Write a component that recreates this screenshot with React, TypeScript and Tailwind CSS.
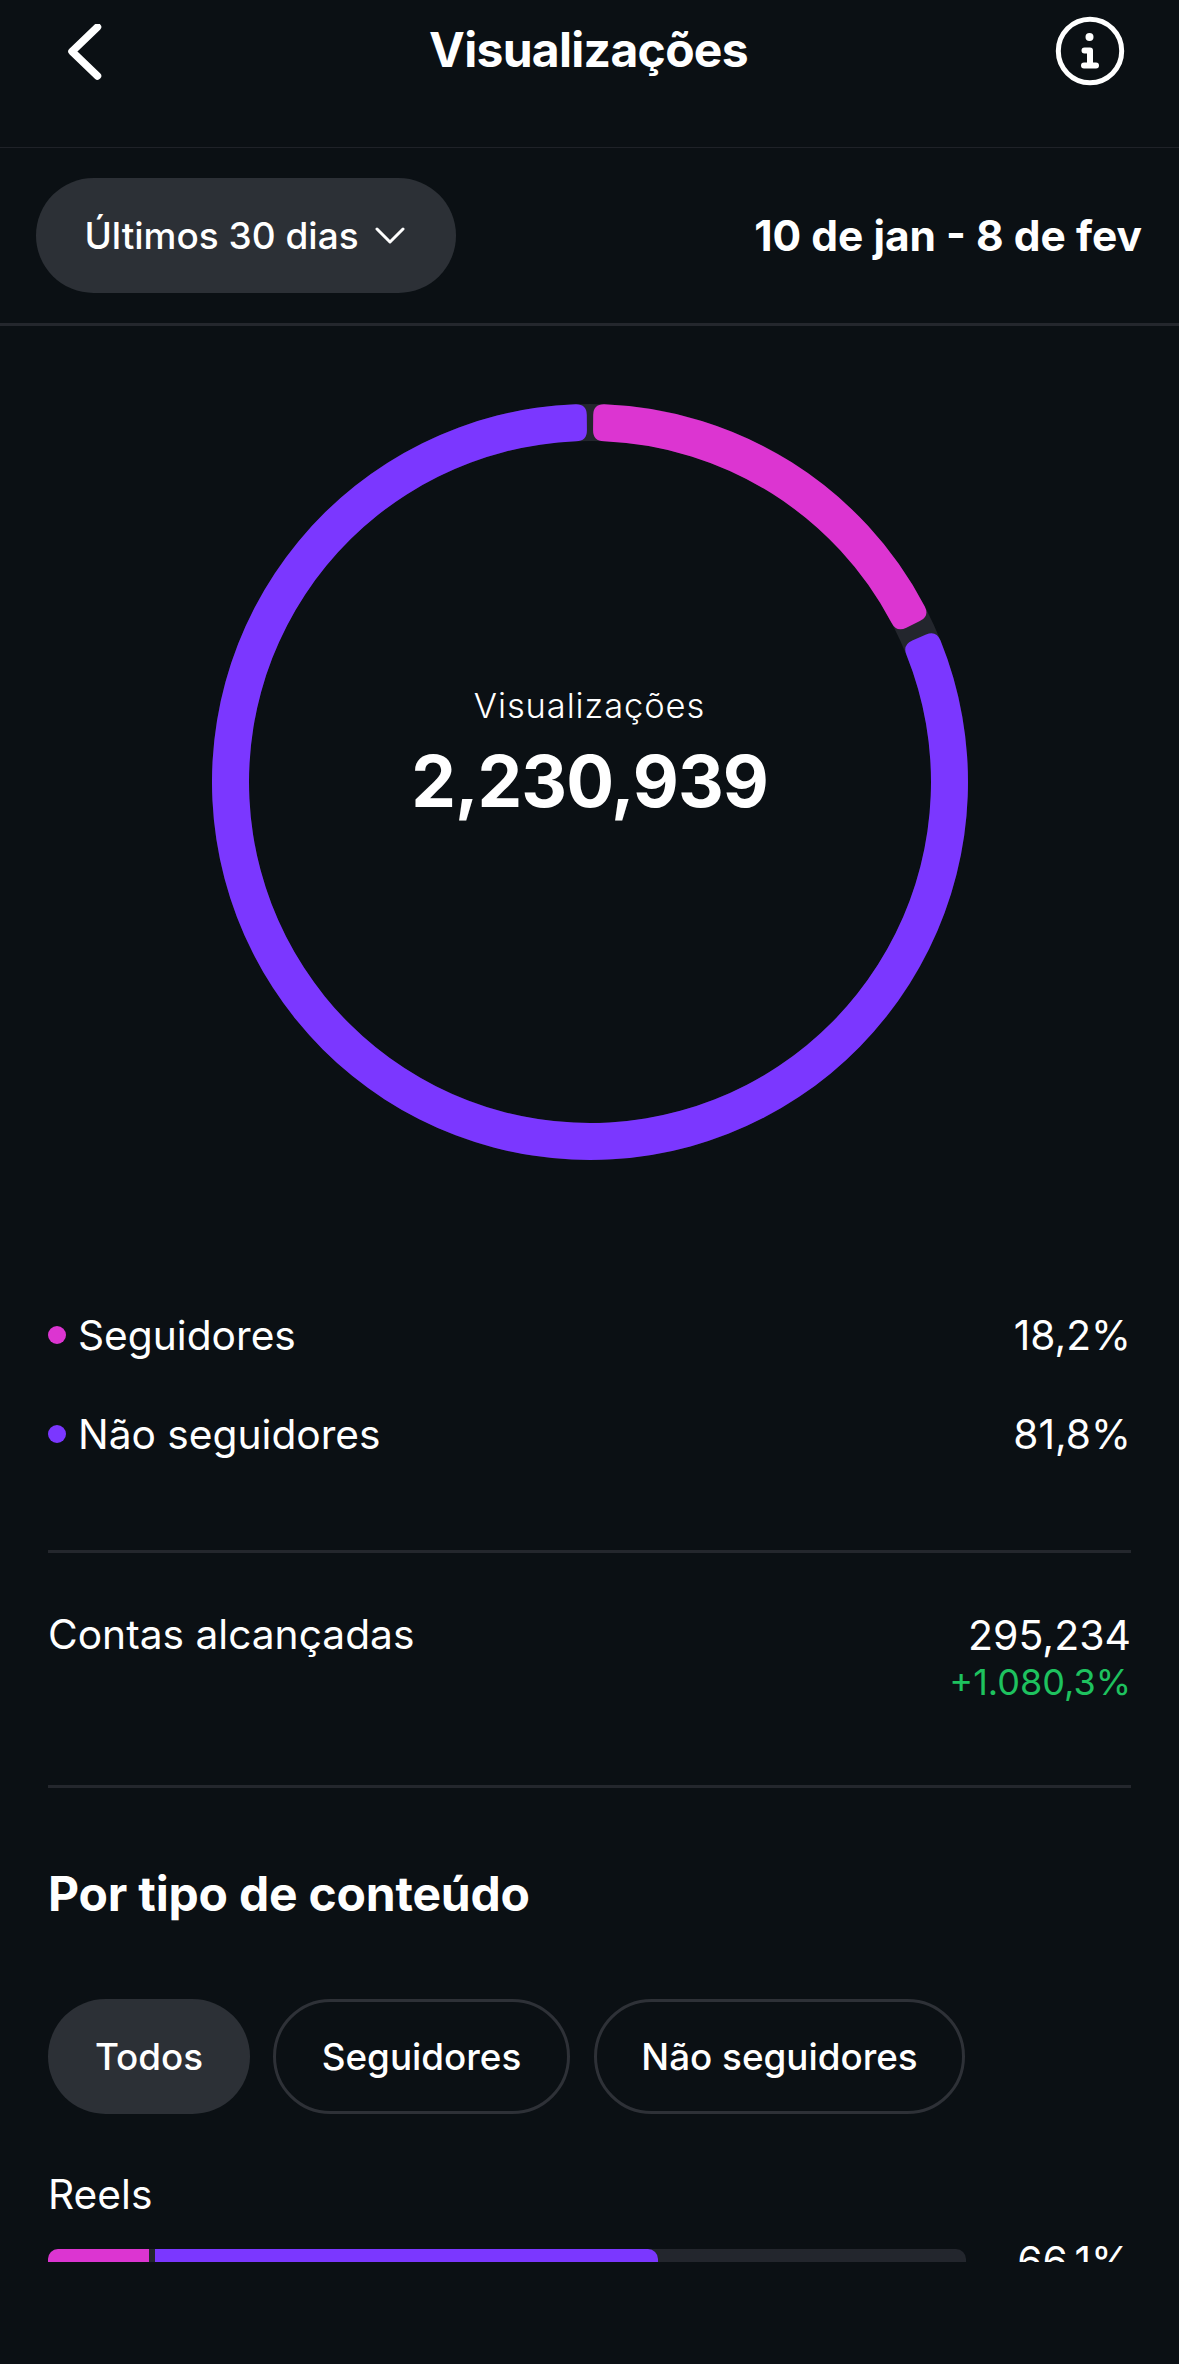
const pink = '#dc35d1';
const purple = '#7b37ff';

// annular sector with small rounded corners, angles in degrees clockwise from 12 o'clock
function sector(a0: number, a1: number, R: number, r: number, c: number, cx: number, cy: number) {
  const pt = (deg: number, rad: number) => {
    const t = (deg * Math.PI) / 180;
    return `${(cx + rad * Math.sin(t)).toFixed(2)} ${(cy - rad * Math.cos(t)).toFixed(2)}`;
  };
  const dO = ((c / R) * 180) / Math.PI;
  const dI = ((c / r) * 180) / Math.PI;
  const large = a1 - a0 > 180 ? 1 : 0;
  return [
    `M${pt(a0 + dO, R)}`,
    `A${R} ${R} 0 ${large} 1 ${pt(a1 - dO, R)}`,
    `Q${pt(a1, R)} ${pt(a1, R - c)}`,
    `L${pt(a1, r + c)}`,
    `Q${pt(a1, r)} ${pt(a1 - dI, r)}`,
    `A${r} ${r} 0 ${large} 0 ${pt(a0 + dI, r)}`,
    `Q${pt(a0, r)} ${pt(a0, r + c)}`,
    `L${pt(a0, R - c)}`,
    `Q${pt(a0, R)} ${pt(a0 + dO, R)}`,
    'Z',
  ].join(' ');
}

function Donut() {
  return (
    <svg width="756" height="756" viewBox="0 0 756 756" fill="none">
      <circle cx="378" cy="378" r="359.5" stroke="#23262d" strokeWidth="37" />
      <path d={sector(0.5, 64, 378, 341, 11, 378, 378)} fill={pink} />
      <path d={sector(66.3, 359.5, 378, 341, 11, 378, 378)} fill={purple} />
    </svg>
  );
}

function LegendRow({ color, label, value }: { color: string; label: string; value: string }) {
  return (
    <div className="flex h-[99px] items-center justify-between text-[40.7px] text-white">
      <div className="flex items-center gap-[12px]">
        <span className="h-[18px] w-[18px] rounded-full" style={{ backgroundColor: color }} />
        <span>{label}</span>
      </div>
      <span>{value}</span>
    </div>
  );
}

export default function App() {
  return (
    <div
      className="h-[2364px] w-[1179px] overflow-hidden bg-[#0b1014] text-white"
      style={{ fontFamily: 'Inter, "Noto Sans", sans-serif' }}
    >
      {/* top bar */}
      <header className="flex h-[148px] items-start justify-between border-b border-[#1f2228] pl-[66px] pr-[54px] pt-[16px]">
        <svg width="36" height="58" viewBox="0 0 36 58" fill="none" className="mt-[8px]">
          <path d="M31.5 3L6 27.5 31.5 52" stroke="white" strokeWidth="7.5" strokeLinecap="round" strokeLinejoin="round" />
        </svg>
        <h1 className="ml-[20px] mt-[6px] text-[48px] font-bold leading-[56px] tracking-[-0.7px]">Visualizações</h1>
        <svg width="70" height="70" viewBox="0 0 70 70" fill="none">
          <circle cx="35" cy="35" r="31.7" stroke="white" strokeWidth="5" />
          <circle cx="34.5" cy="21" r="4" fill="white" />
          <path d="M29.5 34.5H35v15M29 49.5h12" stroke="white" strokeWidth="6" strokeLinecap="round" strokeLinejoin="round" />
        </svg>
      </header>

      {/* period filter */}
      <div className="flex h-[178px] items-center justify-between border-b-[3px] border-[#24272d] pl-[36px] pr-[37px]">
        <button className="flex h-[115px] w-[420px] items-center justify-center gap-[16px] rounded-full bg-[#2c3036] pr-[3px] text-[37px] font-medium">
          Últimos 30 dias
          <svg width="30" height="17" viewBox="0 0 30 17" fill="none">
            <path d="M2 2l13 13L28 2" stroke="white" strokeWidth="3" strokeLinecap="round" strokeLinejoin="round" />
          </svg>
        </button>
        <span className="text-[42.5px] font-bold">10 de jan - 8 de fev</span>
      </div>

      {/* donut */}
      <div className="relative flex justify-center pt-[78px]">
        <Donut />
        <div className="absolute left-0 right-0 top-[358px] flex flex-col items-center">
          <span className="text-[34.5px] font-light leading-[44px] tracking-[0.9px]">Visualizações</span>
          <span className="mt-[11px] text-[71px] font-bold leading-[84px] tracking-[-1px]">2,230,939</span>
        </div>
      </div>

      <div className="px-[48px] pt-[126px]">
        <LegendRow color={pink} label="Seguidores" value="18,2%" />
        <LegendRow color={purple} label="Não seguidores" value="81,8%" />

        <div className="mt-[66px] flex h-[238px] items-start justify-between border-y-[3px] border-[#24272d] pt-[57px]">
          <span className="text-[40.7px] leading-[50px]">Contas alcançadas</span>
          <div className="flex flex-col items-end">
            <span className="text-[41px] leading-[50px]">295,234</span>
            <span className="text-[36px] leading-[44px] text-[#1ec25f]">+1.080,3%</span>
          </div>
        </div>

        <h2 className="mt-[78px] text-[48px] font-bold leading-[56px] tracking-[-0.2px]">Por tipo de conteúdo</h2>

        <div className="mt-[77px] flex gap-[23px] text-[36.8px] font-medium">
          <span className="flex h-[115px] w-[202px] items-center justify-center rounded-full bg-[#2c3036]">Todos</span>
          <span className="flex h-[115px] w-[297px] items-center justify-center rounded-full border-[3px] border-[#2e3137]">Seguidores</span>
          <span className="ml-[1px] flex h-[115px] w-[371px] items-center justify-center rounded-full border-[3px] border-[#2e3137]">Não seguidores</span>
        </div>

        <p className="mt-[56px] text-[40.7px] leading-[50px]">Reels</p>

        <div className="mt-[20px] flex h-[22px] items-start justify-between overflow-hidden">
          <div className="mt-[9px] flex h-[30px] w-[918px] overflow-hidden rounded-[10px] bg-[#23262d]">
            <div className="h-full w-[101px] bg-[#dc35d1]" />
            <div className="ml-[6px] h-full w-[503px] rounded-r-[10px] bg-[#7b37ff]" />
          </div>
          <span className="-mt-[3px] text-[40.7px] leading-[50px]">66,1%</span>
        </div>
      </div>
    </div>
  );
}
